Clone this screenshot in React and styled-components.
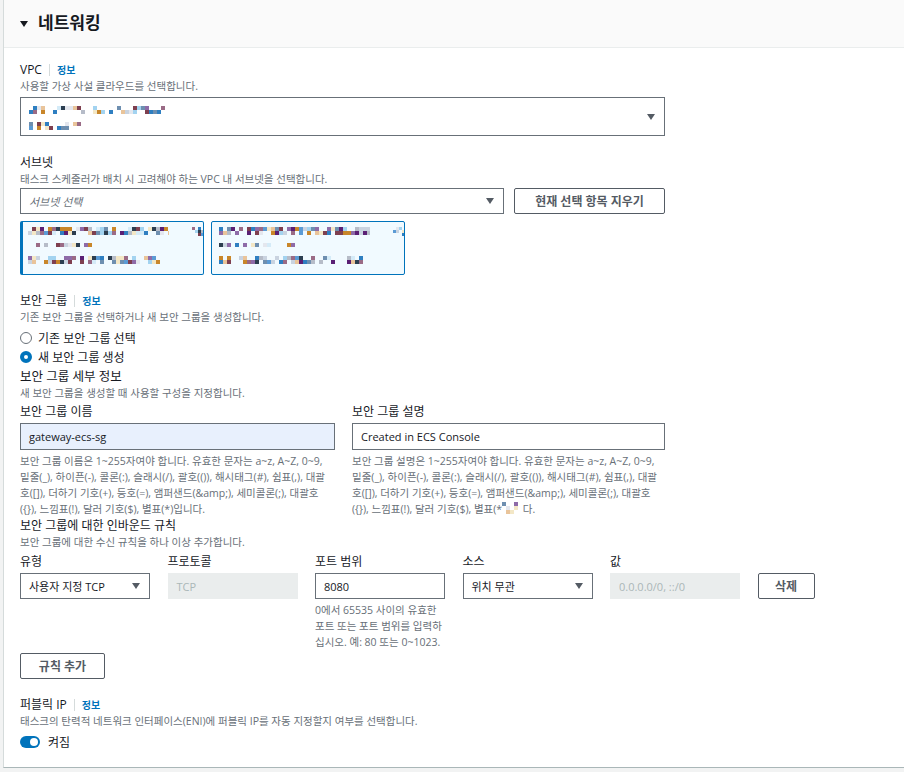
import React from 'react';
import styled, { createGlobalStyle } from 'styled-components';

const GlobalStyle = createGlobalStyle`
  html, body {
    margin: 0;
    padding: 0;
    background: #f2f3f3;
    overflow: hidden;
  }
  body {
    font-family: "Open Sans", "Noto Sans CJK KR", sans-serif;
    color: #16191f;
  }
`;

// blurred / pixelated bits of the original screenshot
const palette = [
  '#5b9bd5', '#2f7fc1', '#8e6ba8', '#5a1f74', '#c8862a', '#e9c49a',
  '#a3d3f0', '#d4ebf8', '#7e3f4f', '#2c3e50', '#f3e7c6', '#b6bcc8',
  '#e4e7ee', '#9a6b86', '#6e8fb0', '#c9d3e0',
];

function rng(seed) {
  let s = seed;
  return () => {
    s = (s * 9301 + 49297) % 233280;
    return s / 233280;
  };
}

function Mosaic({ width, height, cell = 4, seed = 1, density = 0.6 }) {
  const rand = rng(seed);
  const cols = Math.floor(width / cell);
  const rows = Math.floor(height / cell);
  const rects = [];
  for (let r = 0; r < rows; r++) {
    for (let c = 0; c < cols; c++) {
      if (rand() < density) {
        const color = palette[Math.floor(rand() * palette.length)];
        rects.push(
          <rect key={`${r}-${c}`} x={c * cell} y={r * cell} width={cell} height={cell} fill={color} />
        );
      } else {
        rand();
      }
    }
  }
  return (
    <svg width={width} height={height} style={{ display: 'block' }}>
      {rects}
    </svg>
  );
}

const Page = styled.div`
  height: 772px;
  padding-left: 3px;
`;

const Panel = styled.section`
  background: #fff;
  border-left: 1px solid #d5dbdb;
  border-bottom: 1px solid #aab7b8;
  margin-right: -12px;
  height: 768px;
  box-sizing: border-box;
`;

const Header = styled.div`
  height: 47px;
  background: #fafafa;
  border-bottom: 1px solid #eaeded;
  display: flex;
  align-items: center;
  gap: 10px;
  padding-left: 16px;
`;

const Caret = styled.span`
  width: 0;
  height: 0;
  border-left: ${(p) => p.$w || 4}px solid transparent;
  border-right: ${(p) => p.$w || 4}px solid transparent;
  border-top: ${(p) => p.$h || 6}px solid ${(p) => p.$color || '#16191f'};
  flex-shrink: 0;
`;

const Title = styled.h2`
  margin: 0;
  font-size: 17px;
  font-weight: 700;
  line-height: 22px;
  margin-top: -2px;
`;

const Body = styled.div`
  padding: 14px 0 0 16px;
  display: flex;
  flex-direction: column;
`;

const Label = styled.div`
  display: flex;
  align-items: center;
  font-size: 12px;
  line-height: 16px;
  margin-top: ${(p) => p.$mt || 0}px;
  white-space: nowrap;
`;

const Info = styled.span`
  margin-left: 7px;
  padding-left: 7px;
  border-left: 1px solid #d5dbdb;
  color: #0073bb;
  font-weight: 700;
  font-size: 10px;
  line-height: 12px;
`;

const Desc = styled.div`
  font-size: 10.5px;
  line-height: 16px;
  color: #687078;
  white-space: nowrap;
`;

const Help = styled.div`
  font-size: 10.5px;
  line-height: 16px;
  color: #687078;
  white-space: nowrap;
  margin-top: ${(p) => p.$mt || 0}px;
  display: flex;
  flex-direction: column;
`;

const HelpLine = styled.span`
  display: flex;
  align-items: center;
`;

const Box = styled.div`
  box-sizing: border-box;
  width: ${(p) => p.$w}px;
  height: ${(p) => p.$h || 26}px;
  border: 1px solid #687078;
  background: ${(p) => p.$bg || '#fff'};
  display: flex;
  align-items: center;
  justify-content: space-between;
  padding: 0 9px 0 8px;
  font-size: 11px;
  color: ${(p) => p.$color || '#16191f'};
  font-style: ${(p) => (p.$italic ? 'italic' : 'normal')};
  margin-top: ${(p) => p.$mt || 0}px;
  white-space: nowrap;
`;

const Disabled = styled(Box)`
  border-color: #eaeded;
  background: #eaeded;
  color: #aab7b8;
`;

const VpcContent = styled.div`
  display: flex;
  flex-direction: column;
  gap: 7px;
  padding-top: 2px;
`;

const Row = styled.div`
  display: flex;
  gap: ${(p) => p.$gap || 10}px;
  margin-top: ${(p) => p.$mt || 0}px;
  align-items: flex-start;
`;

const Button = styled.button`
  box-sizing: border-box;
  height: 26px;
  width: ${(p) => p.$w}px;
  border: 1px solid #545b64;
  border-radius: 2px;
  background: #fff;
  color: #545b64;
  font-family: inherit;
  font-size: 12px;
  font-weight: 700;
  padding: 0;
  margin-top: ${(p) => p.$mt || 0}px;
  cursor: pointer;
`;

const Chip = styled.div`
  box-sizing: border-box;
  width: ${(p) => p.$w}px;
  height: 54px;
  border: 1px solid #0073bb;
  border-left-width: ${(p) => (p.$active ? 3 : 1)}px;
  border-radius: 2px;
  background: #f1faff;
  padding: 5px 0 0 ${(p) => (p.$active ? 5 : 7)}px;
  display: flex;
  flex-direction: column;
  gap: 6px;
`;

const Radio = styled.label`
  display: flex;
  align-items: center;
  gap: 6px;
  height: 19px;
  font-size: 12px;
`;

const RadioDot = styled.span`
  box-sizing: border-box;
  width: 12px;
  height: 12px;
  border-radius: 50%;
  border: ${(p) => (p.$checked ? '4px solid #0073bb' : '1.5px solid #687078')};
  background: #fff;
`;

const Radios = styled.div`
  display: flex;
  flex-direction: column;
  margin-top: 3px;
`;

const Heading = styled.div`
  font-size: 12.5px;
  line-height: 16px;
  margin-top: 3px;
`;

const Cols = styled.div`
  display: flex;
  gap: 17px;
  margin-top: 3px;
`;

const Col = styled.div`
  display: flex;
  flex-direction: column;
  width: ${(p) => p.$w}px;
`;

const RuleGrid = styled.div`
  display: grid;
  grid-template-columns: repeat(5, 130px) 57px;
  column-gap: 17.5px;
  row-gap: 3px;
  margin-top: 4px;
`;

const ColLabel = styled.div`
  font-size: 12px;
  line-height: 16px;
`;

const Toggle = styled.span`
  box-sizing: border-box;
  width: 20px;
  height: 12px;
  border-radius: 6px;
  background: #0073bb;
  display: flex;
  align-items: center;
  justify-content: flex-end;
  padding-right: 2px;
  &::after {
    content: '';
    width: 8px;
    height: 8px;
    border-radius: 50%;
    background: #fff;
  }
`;

const ToggleRow = styled.div`
  display: flex;
  align-items: center;
  gap: 8px;
  font-size: 12px;
  height: 16px;
  margin-top: 5px;
`;

const Spacer = styled.div`
  width: ${(p) => p.$w}px;
`;

function SelectCaret() {
  return <Caret $w={4.5} $h={6} $color="#545b64" />;
}

function SubnetChip({ w, active, seed }) {
  return (
    <Chip $w={w} $active={active}>
      <Row $gap={0}>
        <Mosaic width={w - 26} height={10} cell={4} seed={seed} density={0.75} />
        <Spacer $w={4} />
        <Mosaic width={12} height={10} cell={3} seed={seed + 7} density={0.5} />
      </Row>
      <Mosaic width={76} height={7} cell={4} seed={seed + 3} density={0.55} />
      <Mosaic width={w - 50} height={9} cell={4} seed={seed + 5} density={0.7} />
    </Chip>
  );
}

export default function App() {
  return (
    <Page>
      <GlobalStyle />
      <Panel>
        <Header>
          <Caret $w={4.5} $h={6} />
          <Title>네트워킹</Title>
        </Header>
        <Body>
          <Label>
            VPC<Info>정보</Info>
          </Label>
          <Desc>사용할 가상 사설 클라우드를 선택합니다.</Desc>
          <Box $w={645} $h={39} $mt={3}>
            <VpcContent>
              <Mosaic width={136} height={9} cell={4} seed={11} density={0.55} />
              <Mosaic width={54} height={8} cell={4} seed={23} density={0.6} />
            </VpcContent>
            <SelectCaret />
          </Box>

          <Label $mt={19}>서브넷</Label>
          <Desc>태스크 스케줄러가 배치 시 고려해야 하는 VPC 내 서브넷을 선택합니다.</Desc>
          <Row $mt={1}>
            <Box $w={484} $italic $color="#687078">
              서브넷 선택
              <SelectCaret />
            </Box>
            <Button $w={151}>현재 선택 항목 지우기</Button>
          </Row>
          <Row $gap={7} $mt={7}>
            <SubnetChip w={184} active seed={41} />
            <SubnetChip w={194} seed={77} />
          </Row>

          <Label $mt={18}>
            보안 그룹<Info>정보</Info>
          </Label>
          <Desc>기존 보안 그룹을 선택하거나 새 보안 그룹을 생성합니다.</Desc>
          <Radios>
            <Radio>
              <RadioDot />
              기존 보안 그룹 선택
            </Radio>
            <Radio>
              <RadioDot $checked />
              새 보안 그룹 생성
            </Radio>
          </Radios>
          <Heading>보안 그룹 세부 정보</Heading>
          <Desc>새 보안 그룹을 생성할 때 사용할 구성을 지정합니다.</Desc>
          <Cols>
            <Col $w={315}>
              <ColLabel>보안 그룹 이름</ColLabel>
              <Box $w={315} $h={27} $mt={3} $bg="#e8f0fd">
                gateway-ecs-sg
              </Box>
              <Help $mt={3}>
                <HelpLine>보안 그룹 이름은 1~255자여야 합니다. 유효한 문자는 a~z, A~Z, 0~9,</HelpLine>
                <HelpLine>밑줄(_), 하이픈(-), 콜론(:), 슬래시(/), 괄호(()), 해시태그(#), 쉼표(,), 대괄</HelpLine>
                <HelpLine>호([]), 더하기 기호(+), 등호(=), 앰퍼샌드(&amp;amp;), 세미콜론(;), 대괄호</HelpLine>
                <HelpLine>({'{}'}), 느낌표(!), 달러 기호($), 별표(*)입니다.</HelpLine>
              </Help>
            </Col>
            <Col $w={313}>
              <ColLabel>보안 그룹 설명</ColLabel>
              <Box $w={313} $h={27} $mt={3}>
                Created in ECS Console
              </Box>
              <Help $mt={3}>
                <HelpLine>보안 그룹 설명은 1~255자여야 합니다. 유효한 문자는 a~z, A~Z, 0~9,</HelpLine>
                <HelpLine>밑줄(_), 하이픈(-), 콜론(:), 슬래시(/), 괄호(()), 해시태그(#), 쉼표(,), 대괄</HelpLine>
                <HelpLine>호([]), 더하기 기호(+), 등호(=), 앰퍼샌드(&amp;amp;), 세미콜론(;), 대괄호</HelpLine>
                <HelpLine>
                  ({'{}'}), 느낌표(!), 달러 기호($), 별표(*
                  <Mosaic width={18} height={14} cell={4} seed={5} density={0.5} />
                  &nbsp;다.
                </HelpLine>
              </Help>
            </Col>
          </Cols>

          <Label $mt={1}>보안 그룹에 대한 인바운드 규칙</Label>
          <Desc>보안 그룹에 대한 수신 규칙을 하나 이상 추가합니다.</Desc>
          <RuleGrid>
            <ColLabel>유형</ColLabel>
            <ColLabel>프로토콜</ColLabel>
            <ColLabel>포트 범위</ColLabel>
            <ColLabel>소스</ColLabel>
            <ColLabel>값</ColLabel>
            <span />
            <Box $w={130}>
              사용자 지정 TCP
              <SelectCaret />
            </Box>
            <Disabled $w={130}>TCP</Disabled>
            <Col $w={130}>
              <Box $w={130}>8080</Box>
              <Help $mt={3}>
                <HelpLine>0에서 65535 사이의 유효한</HelpLine>
                <HelpLine>포트 또는 포트 범위를 입력하</HelpLine>
                <HelpLine>십시오. 예: 80 또는 0~1023.</HelpLine>
              </Help>
            </Col>
            <Box $w={130}>
              위치 무관
              <SelectCaret />
            </Box>
            <Disabled $w={130}>0.0.0.0/0, ::/0</Disabled>
            <Button $w={57}>삭제</Button>
          </RuleGrid>
          <Button $w={85} $mt={3}>
            규칙 추가
          </Button>

          <Label $mt={18}>
            퍼블릭 IP<Info>정보</Info>
          </Label>
          <Desc>태스크의 탄력적 네트워크 인터페이스(ENI)에 퍼블릭 IP를 자동 지정할지 여부를 선택합니다.</Desc>
          <ToggleRow>
            <Toggle />
            켜짐
          </ToggleRow>
        </Body>
      </Panel>
    </Page>
  );
}
